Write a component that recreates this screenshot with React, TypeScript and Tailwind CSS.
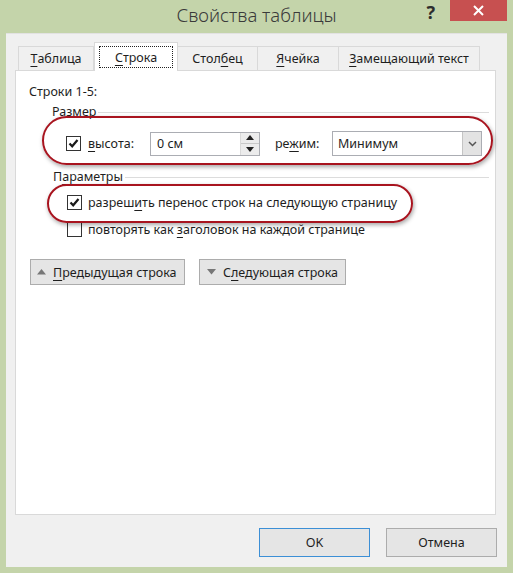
import React from 'react';

const FONT = { fontFamily: '"Noto Sans", "Open Sans", sans-serif' };

const U: React.FC<{ children: React.ReactNode }> = ({ children }) => (
  <span className="underline underline-offset-[3px]">{children}</span>
);

const Check: React.FC<{ checked?: boolean }> = ({ checked }) => (
  <div className="w-[15px] h-[15px] border border-[#333] bg-white flex items-center justify-center shrink-0">
    {checked && (
      <svg width="11" height="11" viewBox="0 0 11 11">
        <path d="M1.5 5.5 L4.2 8.3 L9.5 2" fill="none" stroke="#1a1a1a" strokeWidth="2.2" />
      </svg>
    )}
  </div>
);

const Tri: React.FC<{ up?: boolean; color?: string; w?: number }> = ({ up, color = '#777', w = 9 }) => (
  <svg width={w} height={w / 2 + 1} viewBox="0 0 10 6">
    {up ? <path d="M0 6 L5 0 L10 6 Z" fill={color} /> : <path d="M0 0 L5 6 L10 0 Z" fill={color} />}
  </svg>
);

const tabs = [
  { label: <><U>Т</U>аблица</>, w: 'w-[76px]' },
  { label: <><U>С</U>трока</>, w: 'w-[84px]', active: true },
  { label: <>Стол<U>б</U>ец</>, w: 'w-[80px]' },
  { label: <><U>Я</U>чейка</>, w: 'w-[81px]' },
  { label: <><U>З</U>амещающий текст</>, w: 'w-[141px]' },
];

export default function App() {
  return (
    <div className="w-[513px] h-[573px] bg-[#c4d4aa] text-[12.5px] leading-[17px] text-[#1e1e1e] overflow-hidden" style={FONT}>
      {/* title bar */}
      <div className="h-[33px] grid grid-cols-[1fr_auto_1fr]">
        <div />
        <div className="text-[18.5px] leading-[30px] text-[#3a3a3a] font-light">Свойства таблицы</div>
        <div className="flex justify-end items-start">
          <div className="mr-[15px] text-[18px] leading-[24px] font-bold text-[#2d2d2d]">?</div>
          <div className="w-[57px] h-[21px] mr-[6px] bg-[#c75050] flex items-center justify-center">
            <svg width="11" height="11" viewBox="0 0 11 11">
              <path d="M1 1 L10 10 M10 1 L1 10" stroke="#fff" strokeWidth="2" />
            </svg>
          </div>
        </div>
      </div>

      {/* dialog body */}
      <div className="mx-[6px] w-[501px] h-[534px] bg-[#f0f0f0] border-t border-[#e2e2e2] flex flex-col">
        <div className="mt-[8px] ml-[12px] flex items-end">
          {tabs.map((t, i) =>
            t.active ? (
              <div key={i} className={`${t.w} h-[29px] -mb-px relative z-10 bg-white border border-b-0 border-[#d9d9d9] flex items-center justify-center whitespace-nowrap`}>
                <div className="border border-dotted border-[#222] w-[74px] h-[22px] flex items-center justify-center">
                  {t.label}
                </div>
              </div>
            ) : (
              <div key={i} className={`${t.w} h-[24px] bg-[#f0f0f0] border border-b-0 border-l-0 first:border-l border-[#d9d9d9] flex items-center justify-center whitespace-nowrap`}>
                {t.label}
              </div>
            )
          )}
        </div>

        {/* tab panel */}
        <div className="ml-[9px] w-[481px] h-[445px] bg-white border border-[#d9d9d9] relative pl-[13px] pt-[12px]">
          <div>Строки 1-5:</div>

          <div className="mt-[3px] ml-[23px] mr-[6px] flex items-center gap-[2px]">
            <span>Размер</span>
            <div className="flex-1 border-t border-[#dcdcdc] mt-[2px]" />
          </div>

          <div className="mt-[11px] ml-[37px] flex items-center h-[25px]">
            <Check checked />
            <span className="ml-[7px] w-[62px]"><U>в</U>ысота:</span>
            <div className="w-[110px] h-[24px] border border-[#abadb3] flex items-stretch">
              <div className="flex-1 pl-[6px] flex items-center">0 см</div>
              <div className="w-[19px] flex flex-col border-l border-[#d9d9d9]">
                <div className="flex-1 bg-[#ececec] border-b border-[#c9c9c9] flex items-center justify-center"><Tri up color="#222" w={8} /></div>
                <div className="flex-1 bg-[#ececec] flex items-center justify-center"><Tri color="#222" w={8} /></div>
              </div>
            </div>
            <span className="ml-[15px] w-[57px]">ре<U>ж</U>им:</span>
            <div className="w-[150px] h-[25px] border border-[#abadb3] flex items-stretch">
              <div className="flex-1 pl-[5px] flex items-center">Минимум</div>
              <div className="w-[19px] bg-[#e3e3e3] border-l border-[#c4c4c4] flex items-center justify-center">
                <svg width="9" height="6" viewBox="0 0 9 6">
                  <path d="M1 1 L4.5 4.5 L8 1" fill="none" stroke="#555" strokeWidth="1.5" />
                </svg>
              </div>
            </div>
          </div>

          <div className="mt-[12px] ml-[24px] mr-[6px] flex items-center gap-[2px]">
            <span>П<U>а</U>раметры</span>
            <div className="flex-1 border-t border-[#dcdcdc] mt-[2px]" />
          </div>

          <div className="mt-[9px] ml-[38px] flex items-center gap-[6px] h-[17px]">
            <Check checked />
            <span className="whitespace-nowrap">разреш<U>и</U>ть перенос строк на следующую страницу</span>
          </div>
          <div className="mt-[10px] ml-[38px] flex items-center gap-[6px] h-[17px]">
            <Check />
            <span className="whitespace-nowrap">повторять как <U>з</U>аголовок на каждой странице</span>
          </div>

          <div className="mt-[21px] ml-[1px] flex gap-[14px] whitespace-nowrap">
            <div className="w-[155px] h-[26px] bg-[#e5e5e5] border border-[#acacac] flex items-center pl-[6px] gap-[7px]">
              <Tri up />
              <span><U>П</U>редыдущая строка</span>
            </div>
            <div className="w-[147px] h-[26px] bg-[#e5e5e5] border border-[#acacac] flex items-center pl-[7px] gap-[7px]">
              <Tri />
              <span>С<U>л</U>едующая строка</span>
            </div>
          </div>

          {/* red annotation ovals */}
          <div className="absolute left-[26px] top-[45px] w-[451px] h-[49px] rounded-full border-2 border-[#a8141f] shadow-[1px_2px_4px_rgba(0,0,0,0.35)] pointer-events-none" />
          <div className="absolute left-[31px] top-[113px] w-[366px] h-[39px] rounded-full border-2 border-[#a8141f] shadow-[1px_2px_4px_rgba(0,0,0,0.35)] pointer-events-none" />
        </div>

        <div className="mt-[13px] flex justify-end gap-[16px] pr-[10px]">
          <div className="w-[111px] h-[29px] bg-[#e5e5e5] border border-[#3c8fd6] flex items-center justify-center">OK</div>
          <div className="w-[111px] h-[29px] bg-[#e5e5e5] border border-[#acacac] flex items-center justify-center">Отмена</div>
        </div>
      </div>
    </div>
  );
}
